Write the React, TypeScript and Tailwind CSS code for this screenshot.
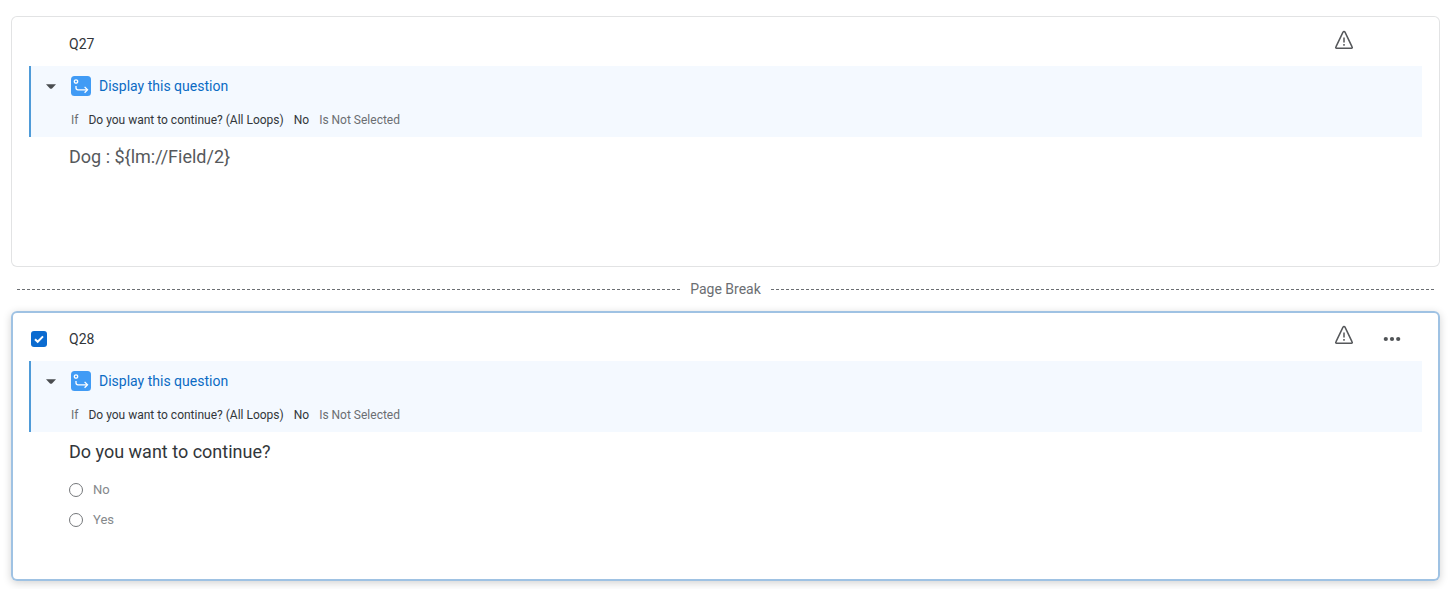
import { useState } from "react";
import type { ReactNode } from "react";
import clsx from "clsx";

type Condition = {
  question: string;
  answer: string;
  operator: string;
};

const condition: Condition = {
  question: "Do you want to continue? (All Loops)",
  answer: "No",
  operator: "Is Not Selected",
};

const choices = ["No", "Yes"];

function WarningIcon() {
  return (
    <svg
      width="20"
      height="20"
      viewBox="0 0 20 20"
      fill="none"
      stroke="#55575a"
      strokeWidth="1.5"
      strokeLinejoin="round"
      aria-hidden="true"
    >
      <path d="M9 2.2 1.8 17.1a.8.8 0 0 0 .7 1.2h15a.8.8 0 0 0 .7-1.2L11 2.2a1.1 1.1 0 0 0-2 0Z" />
      <path d="M10 7.5v5M10 14v1.8" />
    </svg>
  );
}

function MoreIcon() {
  return (
    <svg width="20" height="20" viewBox="0 0 20 20" fill="#505356" aria-hidden="true">
      <circle cx="3.8" cy="10" r="2.1" />
      <circle cx="10" cy="10" r="2.1" />
      <circle cx="16.2" cy="10" r="2.1" />
    </svg>
  );
}

function BranchIcon() {
  return (
    <svg width="20" height="20" viewBox="0 0 20 20" fill="none" aria-hidden="true">
      <rect width="20" height="20" rx="3.5" fill="#409bf5" />
      <g stroke="#fff" strokeWidth="1.3">
        <circle cx="5" cy="5.5" r="1.7" />
        <path d="M5 10v1.8a2 2 0 0 0 2 2h9.2" />
        <path d="m13.6 10.9 2.9 2.9-2.9 2.9" />
      </g>
    </svg>
  );
}

function DisplayLogic({ condition }: { condition: Condition }) {
  return (
    <section className="h-[71px] border-l-2 border-[#4f9bd8] bg-[#f4f9ff] pt-2.5">
      <div className="flex h-5 items-center">
        <button
          type="button"
          aria-label="Collapse display logic"
          className="flex w-10 justify-center"
        >
          <svg width="10" height="5" viewBox="0 0 10 5" fill="#4a4d50" aria-hidden="true">
            <path d="M0 .3h10L6 4.4q-1 .8-2 0Z" />
          </svg>
        </button>
        <BranchIcon />
        <button type="button" className="ml-2 text-sm leading-5 text-[#0b6bc4]">
          Display this question
        </button>
      </div>
      <p className="mt-4 flex gap-2.5 pl-10 text-xs leading-4 text-[#6b6e72]">
        <span>If</span>
        <span className="text-[#32363a]">{condition.question}</span>
        <span className="text-[#32363a]">{condition.answer}</span>
        <span>{condition.operator}</span>
      </p>
    </section>
  );
}

function QuestionCard({
  id,
  selected,
  onSelect,
  className,
  children,
}: {
  id: string;
  selected?: boolean;
  onSelect?: () => void;
  className?: string;
  children: ReactNode;
}) {
  return (
    <article
      className={clsx(
        "rounded-md bg-white px-[18px] ring-inset",
        selected
          ? "shadow-[0_2px_8px_rgba(0,0,0,0.18)] ring-2 ring-[#9fc2e3]"
          : "ring-1 ring-[#e2e3e4]",
        className
      )}
    >
      <header className="flex h-[50px] items-center pt-1.5">
        <div className="flex w-10 pl-0.5">
          {selected && (
            <label className="grid">
              <input
                type="checkbox"
                checked
                onChange={onSelect}
                aria-label={`Select ${id}`}
                className="col-start-1 row-start-1 size-4 appearance-none rounded-[3px] bg-[#0b6bd0]"
              />
              <svg
                width="16"
                height="16"
                viewBox="0 0 16 16"
                fill="none"
                stroke="#fff"
                strokeWidth="2"
                className="pointer-events-none col-start-1 row-start-1"
                aria-hidden="true"
              >
                <path d="m4 8.2 2.7 2.6L12 5.4" />
              </svg>
            </label>
          )}
        </div>
        <h2 className="flex-1 text-sm leading-5 text-[#32363a]">{id}</h2>
        <div className="mr-5 flex items-end gap-7">
          <button type="button" aria-label="Warning" className="w-5 pb-2">
            <WarningIcon />
          </button>
          {selected ? (
            <button type="button" aria-label="More options" className="w-5 pb-1">
              <MoreIcon />
            </button>
          ) : (
            <span className="w-5" />
          )}
        </div>
      </header>
      <DisplayLogic condition={condition} />
      <div className="pl-10">{children}</div>
    </article>
  );
}

function PageBreak() {
  const line =
    "h-px flex-1 bg-[repeating-linear-gradient(to_right,#6b6e72_0_3px,transparent_3px_5px)]";
  return (
    <div className="flex h-11 items-center gap-2.5 px-1.5">
      <span className={line} />
      <span className="text-sm leading-5 text-[#6b6e72]">Page Break</span>
      <span className={line} />
    </div>
  );
}

export default function App() {
  const [selected, setSelected] = useState(true);
  const [answer, setAnswer] = useState("");

  return (
    <main className="bg-white pt-4 pr-2 pb-2 pl-[11px] font-['Roboto',sans-serif]">
      <QuestionCard id="Q27" className="min-h-[251px]">
        <p className="pt-2 text-lg leading-6 text-[#56595c]">{"Dog : ${lm://Field/2}"}</p>
      </QuestionCard>
      <PageBreak />
      <QuestionCard
        id="Q28"
        selected={selected}
        onSelect={() => setSelected(!selected)}
        className="min-h-[270px]"
      >
        <p className="pt-2 text-lg leading-6 text-[#32363a]">Do you want to continue?</p>
        <div className="mt-4 flex flex-col items-start gap-2.5">
          {choices.map((choice) => (
            <label
              key={choice}
              className="flex items-center gap-2.5 text-[13px] leading-5 text-[#85888b]"
            >
              <input
                type="radio"
                name="continue"
                value={choice}
                checked={answer === choice}
                onChange={() => setAnswer(choice)}
                className="size-3.5 appearance-none rounded-full border border-[#74777a] bg-white checked:border-4"
              />
              {choice}
            </label>
          ))}
        </div>
      </QuestionCard>
    </main>
  );
}
